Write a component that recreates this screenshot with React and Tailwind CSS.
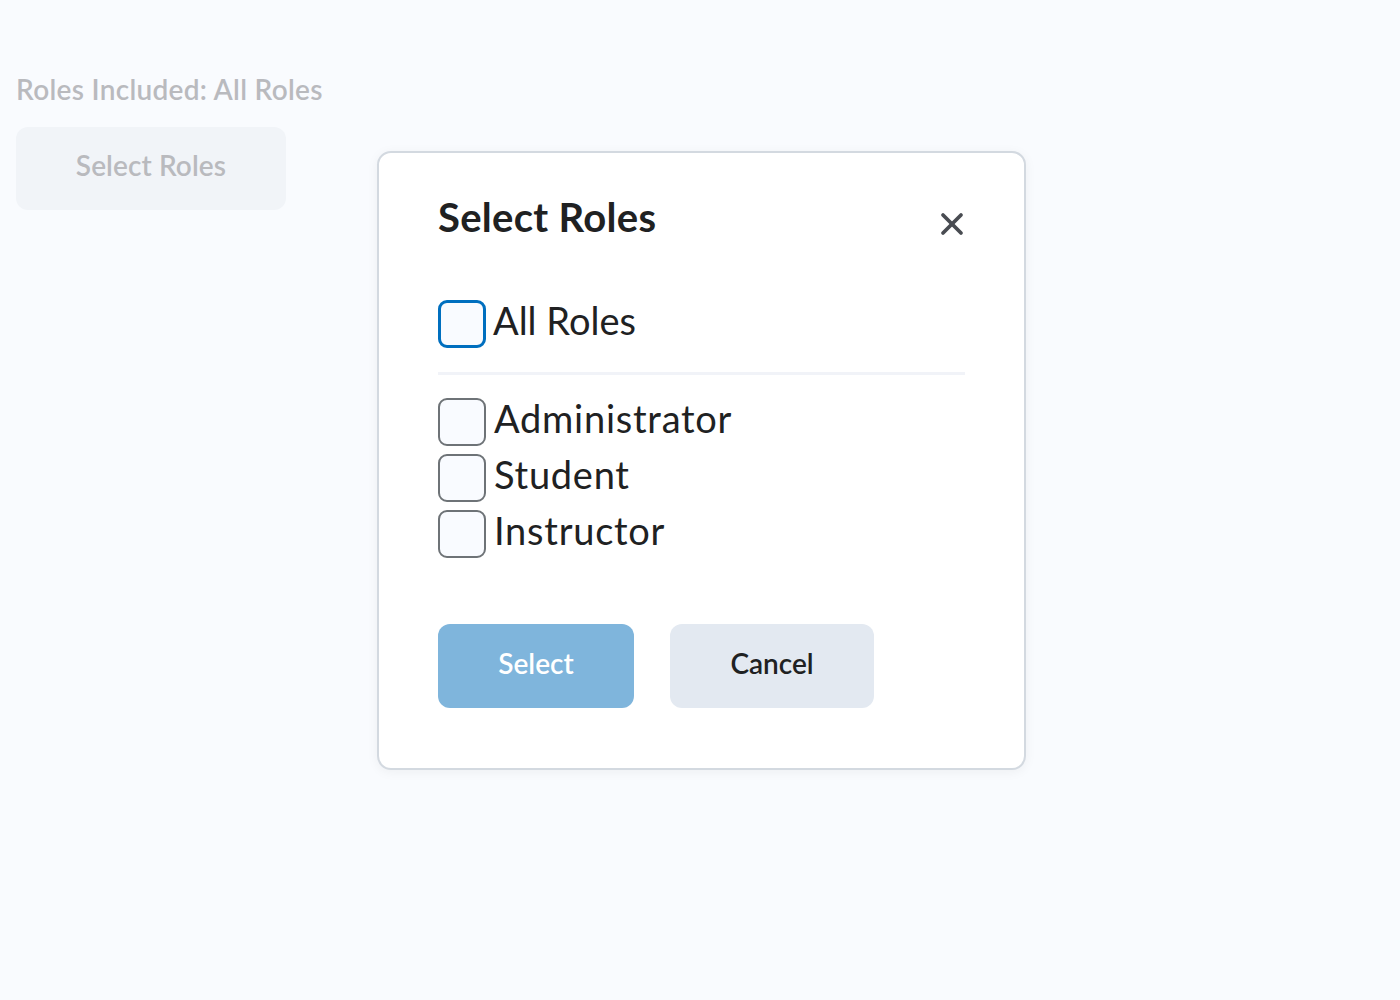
import React from "react";
import { X } from "lucide-react";

const roles = ["Administrator", "Student", "Instructor"];

const Box = ({ focused }) => (
  <span
    className={
      "block w-[48px] h-[48px] shrink-0 rounded-[9px] bg-[#f9fbff] " +
      (focused ? "border-[3px] border-[#006fbf]" : "border-2 border-[#6e7377]")
    }
  />
);

export default function App() {
  return (
    <div className="min-h-[1000px] bg-[#f9fbfe] font-['Lato',sans-serif] relative">
      <div className="pt-[71px] pl-[16px]">
        <p className="text-[28px] leading-[36px] font-semibold tracking-[0.3px] text-[#b9babe]">
          Roles Included: All Roles
        </p>
        <button className="mt-[20px] w-[270px] h-[83px] pb-[8px] rounded-[12px] bg-[#f1f4f8] text-[28px] font-semibold tracking-[0.1px] text-[#b9babe]">
          Select Roles
        </button>
      </div>

      <div className="absolute left-[377px] top-[151px] w-[649px] h-[619px] rounded-[14px] border-2 border-[#d3d9e0] bg-white shadow-[0_2px_12px_rgba(0,0,0,0.05)] px-[59px] pt-[38px]">
        <div className="flex items-start justify-between">
          <h2 className="text-[40px] leading-[52px] font-bold tracking-[0.3px] text-[#202122]">
            Select Roles
          </h2>
          <button className="mt-[15px] mr-[-5px] text-[#494c52]">
            <X size={36} strokeWidth={2.5} />
          </button>
        </div>

        <label className="mt-[57px] h-[48px] flex items-center gap-[7px]">
          <Box focused />
          <span className="mb-[8px] text-[38px] leading-[48px] text-[#202122]">All Roles</span>
        </label>

        <div className="mt-[24px] h-[3px] bg-[#f1f3f8]" />

        <div className="mt-[23px] flex flex-col gap-[8px]">
          {roles.map((r) => (
            <label key={r} className="h-[48px] flex items-center gap-[8px]">
              <Box />
              <span className="mb-[8px] text-[38px] leading-[48px] tracking-[0.75px] text-[#202122]">
                {r}
              </span>
            </label>
          ))}
        </div>

        <div className="mt-[66px] flex gap-[36px]">
          <button className="w-[196px] h-[84px] pb-[6px] rounded-[12px] bg-[#7fb5dc] text-white text-[28px] font-semibold">
            Select
          </button>
          <button className="w-[204px] h-[84px] pb-[6px] rounded-[12px] bg-[#e3e9f1] text-[#202122] text-[28px] font-semibold">
            Cancel
          </button>
        </div>
      </div>
    </div>
  );
}
